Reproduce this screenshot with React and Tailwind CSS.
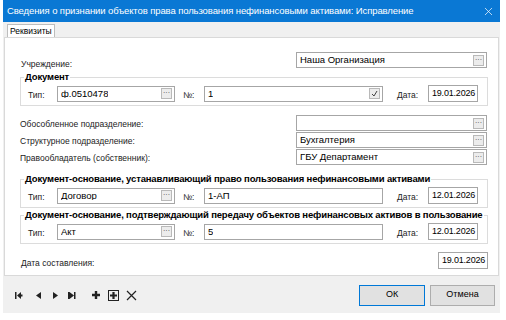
import { X } from "lucide-react";

const font = { fontFamily: '"Liberation Sans", Arial, sans-serif' };

function Dots() {
  return (
    <span className="flex h-[11px] w-[11px] items-end justify-center border border-[#b9b9b9] bg-[#ececec] pb-[2px] text-[7px] leading-none text-[#333]">
      ···
    </span>
  );
}

function Check() {
  return (
    <span className="flex h-[11px] w-[11px] items-center justify-center border border-[#b9b9b9] bg-[#ececec]">
      <svg width="7" height="7" viewBox="0 0 7 7">
        <path d="M1 4 L3 6 L6 1" stroke="#444" strokeWidth="1" fill="none" />
      </svg>
    </span>
  );
}

function Field({ value = "", w, btn }) {
  return (
    <div
      className="flex h-[16px] shrink-0 items-center justify-between border border-[#a6a6a6] bg-white pl-[3px] pr-[2px] text-[9.5px] text-black"
      style={{ width: w }}
    >
      <span className="truncate leading-none">{value}</span>
      {btn === "dots" && <Dots />}
      {btn === "check" && <Check />}
    </div>
  );
}

function DateField({ value }) {
  return (
    <div className="flex h-[17px] w-[50px] shrink-0 items-center border border-[#a6a6a6] bg-white pl-[3px] text-[9px] leading-none tracking-[-0.2px] text-black">
      {value}
    </div>
  );
}

function Label({ children, className = "" }) {
  return <span className={`text-[8.5px] leading-none text-[#222] ${className}`}>{children}</span>;
}

function Group({ title, type, num, numBtn, date, className = "" }) {
  return (
    <div className={`relative ml-[15px] mr-[10px] h-[29px] shrink-0 border border-[#dcdcdc] ${className}`}>
      <span className="absolute left-[3px] top-[-6px] whitespace-nowrap bg-white px-[1px] text-[9.5px] font-bold leading-none tracking-[-0.15px] text-black">
        {title}
      </span>
      <div className="mt-[7px] flex h-[17px] items-center">
        <Label className="ml-[7px] mt-[4px] w-[29px]">Тип:</Label>
        <Field value={type} w={118} btn="dots" />
        <Label className="ml-[8px] mt-[4px] w-[21px]">№:</Label>
        <Field value={num} w={179} btn={numBtn} />
        <Label className="ml-[14px] mt-[4px] w-[31px]">Дата:</Label>
        <DateField value={date} />
      </div>
    </div>
  );
}

function Row({ label, value }) {
  return (
    <div className="flex h-[16px] items-center justify-between pl-[15px] pr-[11px]">
      <Label className="mt-[3px]">{label}</Label>
      <Field value={value} w={191} btn="dots" />
    </div>
  );
}

function NavIcon({ d, className = "" }) {
  return (
    <svg width="9" height="7" viewBox="0 0 9 7" className={className}>
      <path d={d} fill="#222" />
    </svg>
  );
}

export default function App() {
  return (
    <div className="h-[320px] w-[506px] bg-white pl-[3px]" style={font}>
      <div className="flex h-[313px] w-[497px] flex-col bg-[#f0f0f0]">
        <div className="flex h-[22px] shrink-0 items-center justify-between bg-[#0a78d4] pl-[4px] pr-[5px] text-[9.5px] tracking-[-0.1px] text-white">
          <span className="whitespace-nowrap">Сведения о признании объектов права пользования нефинансовыми активами: Исправление</span>
          <X size={13} strokeWidth={1.3} />
        </div>
        <div className="flex h-[15px] shrink-0 items-end pl-[4px]">
          <div className="h-[13px] border border-b-0 border-[#bdbdbd] bg-white px-[2px] text-[8.5px] leading-[12px] text-black">
            Реквизиты
          </div>
        </div>
        <div className="mx-[1px] flex h-[239px] shrink-0 flex-col border border-[#d9d9d9] bg-white">
          <div className="mt-[14px] flex h-[16px] items-center justify-between pl-[16px] pr-[11px]">
            <Label className="mt-[9px]">Учреждение:</Label>
            <Field value="Наша Организация" w={191} btn="dots" />
          </div>
          <Group
            className="mt-[9px]"
            title="Документ"
            type="ф.0510478"
            num="1"
            numBtn="check"
            date="19.01.2026"
          />
          <div className="mt-[9px] flex flex-col gap-[1px]">
            <Row label="Обособленное подразделение:" value="" />
            <Row label="Структурное подразделение:" value="Бухгалтерия" />
            <Row label="Правообладатель (собственник):" value="ГБУ Департамент" />
          </div>
          <Group
            className="mt-[14px]"
            title="Документ-основание, устанавливающий право пользования нефинансовыми активами"
            type="Договор"
            num="1-АП"
            date="12.01.2026"
          />
          <Group
            className="mt-[7px]"
            title="Документ-основание, подтверждающий передачу объектов нефинансовых активов в пользование"
            type="Акт"
            num="5"
            date="12.01.2026"
          />
          <div className="mt-[8px] flex h-[17px] items-center justify-between pl-[16px] pr-[10px]">
            <Label className="mt-[5px]">Дата составления:</Label>
            <DateField value="19.01.2026" />
          </div>
        </div>
        <div className="flex flex-1 items-center justify-between pl-[12px] pr-[5px] pt-[1px]">
          <div className="flex items-center">
            <NavIcon d="M0 0h1.5v7H0z M2 3.5 L6 0 V7 Z M6 2.5h1.5v2H6z" />
            <NavIcon className="ml-[11px]" d="M1 3.5 L6 0 V7 Z" />
            <NavIcon className="ml-[7px]" d="M2 0 L7 3.5 L2 7 Z" />
            <NavIcon className="ml-[8px]" d="M0 0H1.5V7H0z M1.5 0 L6 3.5 L1.5 7 Z M6 0H7.5v7H6z" />
            <svg width="8" height="8" viewBox="0 0 8 8" className="ml-[15px]">
              <path d="M2.8 0h2.4v2.8H8v2.4H5.2V8H2.8V5.2H0V2.8h2.8z" fill="#222" />
            </svg>
            <svg width="11" height="11" viewBox="0 0 11 11" className="ml-[8px]">
              <rect x="0.5" y="0.5" width="10" height="10" fill="none" stroke="#222" />
              <path d="M4.4 2h2.2v2.4H9v2.2H6.6V9H4.4V6.6H2V4.4h2.4z" fill="#222" />
            </svg>
            <svg width="11" height="11" viewBox="0 0 11 11" className="ml-[7px]">
              <path d="M1 1 L10 10 M10 1 L1 10" stroke="#222" strokeWidth="1.2" />
            </svg>
          </div>
          <div className="flex items-center gap-[5px] text-[9px] text-black">
            <div className="flex h-[21px] w-[66px] items-center justify-center border border-[#0078d7] bg-[#e1e1e1]">
              ОК
            </div>
            <div className="flex h-[21px] w-[65px] items-center justify-center border border-[#adadad] bg-[#e1e1e1]">
              Отмена
            </div>
          </div>
        </div>
      </div>
    </div>
  );
}
